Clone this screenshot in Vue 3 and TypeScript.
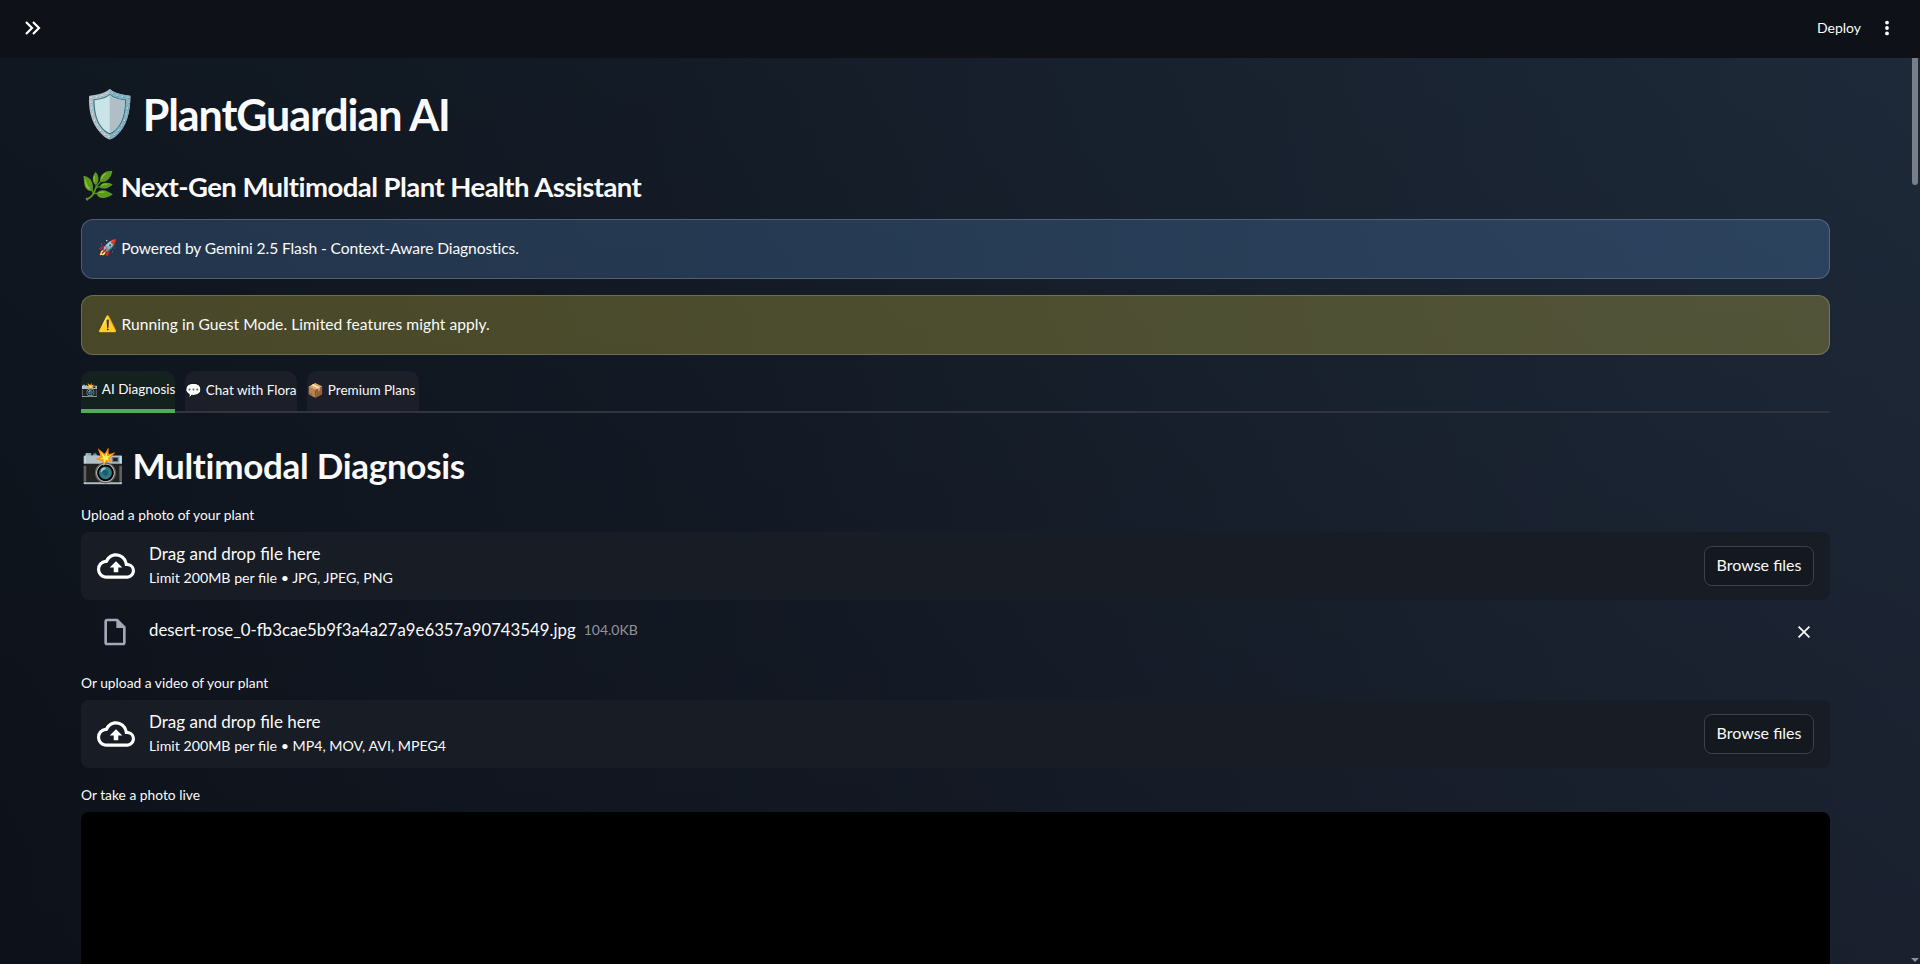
<script setup lang="ts">
const tabs = [
  { icon: '📸', label: 'AI Diagnosis', active: true },
  { icon: '💬', label: 'Chat with Flora', active: false },
  { icon: '📦', label: 'Premium Plans', active: false },
]
</script>

<template>
  <div class="app">
    <header class="topbar">
      <svg class="expand" viewBox="0 0 24 24" width="24" height="24" fill="none" stroke="#fff" stroke-width="2.2">
        <path d="M6 6l6 6-6 6M13 6l6 6-6 6" />
      </svg>
      <div class="top-actions">
        <span class="deploy">Deploy</span>
        <svg viewBox="0 0 24 24" width="24" height="24" fill="#fff">
          <circle cx="12" cy="6.6" r="1.9" /><circle cx="12" cy="12" r="1.9" /><circle cx="12" cy="17.4" r="1.9" />
        </svg>
      </div>
    </header>
    <main class="main">
      <h1 class="title"><span class="emoji">🛡️</span><span>PlantGuardian AI</span></h1>
      <h3 class="subtitle"><span class="emoji">🌿</span><span>Next-Gen Multimodal Plant Health Assistant</span></h3>
      <div class="alert info"><span class="emoji">🚀</span><span>Powered by Gemini 2.5 Flash - Context-Aware Diagnostics.</span></div>
      <div class="alert warn"><span class="emoji">⚠️</span><span>Running in Guest Mode. Limited features might apply.</span></div>
      <nav class="tabs">
        <div v-for="t in tabs" :key="t.label" class="tab" :class="{ active: t.active }">
          <span class="emoji">{{ t.icon }}</span><span>{{ t.label }}</span>
        </div>
      </nav>
      <h2 class="section"><span class="emoji">📸</span><span>Multimodal Diagnosis</span></h2>

      <div class="label first">Upload a photo of your plant</div>
      <div class="drop">
        <svg class="cloud" viewBox="0 0 24 24" width="38" height="38" fill="#fff">
          <path d="M19.35 10.04A7.49 7.49 0 0 0 12 4C9.11 4 6.6 5.64 5.35 8.04A5.994 5.994 0 0 0 0 14c0 3.31 2.69 6 6 6h13c2.76 0 5-2.24 5-5 0-2.64-2.05-4.78-4.65-4.96zM19 18H6c-2.21 0-4-1.79-4-4 0-2.05 1.53-3.76 3.56-3.97l1.07-.11.5-.95A5.469 5.469 0 0 1 12 6c2.62 0 4.88 1.86 5.39 4.43l.3 1.5 1.53.11A2.98 2.98 0 0 1 22 15c0 1.65-1.35 3-3 3zM8 13h2.55v3h2.9v-3H16l-4-4z" />
        </svg>
        <div class="drop-text">
          <div class="drop-title">Drag and drop file here</div>
          <div class="drop-sub">Limit 200MB per file • JPG, JPEG, PNG</div>
        </div>
        <button class="browse">Browse files</button>
      </div>
      <div class="file">
        <svg class="file-icon" viewBox="0 0 24 24" width="32" height="32" fill="#a3a8b8">
          <path d="M14 2H6c-1.1 0-1.99.9-1.99 2L4 20c0 1.1.89 2 1.99 2H18c1.1 0 2-.9 2-2V8l-6-6zM6 20V4h7v5h5v11H6z" />
        </svg>
        <span class="file-name">desert-rose_0-fb3cae5b9f3a4a27a9e6357a90743549.jpg</span>
        <span class="file-size">104.0KB</span>
        <svg class="close" viewBox="0 0 24 24" width="20" height="20" fill="none" stroke="#fff" stroke-width="2">
          <path d="M5.5 5.5l13 13M18.5 5.5l-13 13" />
        </svg>
      </div>

      <div class="label second">Or upload a video of your plant</div>
      <div class="drop">
        <svg class="cloud" viewBox="0 0 24 24" width="38" height="38" fill="#fff">
          <path d="M19.35 10.04A7.49 7.49 0 0 0 12 4C9.11 4 6.6 5.64 5.35 8.04A5.994 5.994 0 0 0 0 14c0 3.31 2.69 6 6 6h13c2.76 0 5-2.24 5-5 0-2.64-2.05-4.78-4.65-4.96zM19 18H6c-2.21 0-4-1.79-4-4 0-2.05 1.53-3.76 3.56-3.97l1.07-.11.5-.95A5.469 5.469 0 0 1 12 6c2.62 0 4.88 1.86 5.39 4.43l.3 1.5 1.53.11A2.98 2.98 0 0 1 22 15c0 1.65-1.35 3-3 3zM8 13h2.55v3h2.9v-3H16l-4-4z" />
        </svg>
        <div class="drop-text">
          <div class="drop-title">Drag and drop file here</div>
          <div class="drop-sub">Limit 200MB per file • MP4, MOV, AVI, MPEG4</div>
        </div>
        <button class="browse">Browse files</button>
      </div>

      <div class="label third">Or take a photo live</div>
      <div class="camera"></div>
    </main>
    <div class="scrollbar"><div class="thumb"></div><div class="arrow"></div></div>
  </div>
</template>

<style>
html, body { margin: 0; background: #0e1117; overflow: hidden; }
</style>

<style scoped>
.app {
  position: relative;
  width: 1920px;
  height: 964px;
  overflow: hidden;
  color: #fafafa;
  font-family: Lato, "Noto Sans", sans-serif;
  background:
    radial-gradient(circle at 100% 0, rgba(50, 90, 110, 0.12), transparent 60%),
    linear-gradient(to bottom, rgba(40, 80, 100, 0.1), transparent),
    linear-gradient(to right, #0d1119, #191e2c);
}
.emoji { font-family: "Noto Color Emoji", sans-serif; }
.topbar {
  height: 58px;
  box-sizing: border-box;
  display: flex;
  align-items: center;
  justify-content: space-between;
  padding: 0 21px 3px 20px;
  background: #0e1117;
}
.top-actions { display: flex; align-items: center; gap: 14px; }
.deploy { font-size: 14px; }
.main {
  box-sizing: border-box;
  padding: 0 90px 0 81px;
  display: flex;
  flex-direction: column;
}
.title {
  margin: 25px 0 0;
  display: flex;
  align-items: center;
  gap: 4.5px;
  height: 62px;
  font-size: 43px;
  font-weight: 700;
  letter-spacing: -1.1px;
}
.title .emoji { font-size: 46px; letter-spacing: 0; line-height: 62px; }
.subtitle {
  margin: 22px 0 0;
  display: flex;
  align-items: center;
  gap: 6px;
  height: 38px;
  font-size: 27.5px;
  font-weight: 700;
  letter-spacing: -0.55px;
}
.subtitle .emoji { font-size: 27px; letter-spacing: 0; }
.alert {
  box-sizing: border-box;
  height: 60px;
  display: flex;
  align-items: center;
  gap: 4px;
  padding: 0 16px 3px;
  border-radius: 12px;
  border: 1px solid rgba(255, 255, 255, 0.2);
  font-size: 15.6px;
  letter-spacing: -0.1px;
}
.info { margin-top: 14px; background: rgba(100, 158, 230, 0.23); }
.warn { margin-top: 16px; background: rgba(223, 203, 70, 0.28); letter-spacing: 0.04px; }
.tabs {
  box-sizing: border-box;
  display: flex;
  gap: 10px;
  height: 42px;
  margin-top: 16px;
  border-bottom: 2px solid #31333f;
}
.tab {
  background: #1c1f28;
  border-radius: 10px 10px 0 0;
  font-size: 13.5px;
  line-height: 38px;
  white-space: nowrap;
  width: 112px;
  display: flex;
  gap: 4px;
}
.tab.active {
  width: 94px;
  background: #13221f;
  height: 42px;
  line-height: 36px;
  box-sizing: border-box;
  border-bottom: 4px solid #4caf50;
}
.section {
  margin: 27px 0 0;
  display: flex;
  align-items: center;
  gap: 8px;
  height: 50px;
  font-size: 35px;
  font-weight: 700;
  letter-spacing: -0.3px;
}
.section .emoji { font-size: 35px; letter-spacing: 0; }
.label { font-size: 13.8px; line-height: 18px; }
.first { margin-top: 16px; }
.second { margin-top: 10px; }
.third { margin-top: 18px; }
.drop {
  margin-top: 8px;
  height: 68px;
  box-sizing: border-box;
  padding: 0 16px;
  display: flex;
  align-items: center;
  border-radius: 8px;
  background: #171c25;
}
.cloud { flex: none; margin-right: 14px; }
.drop-text { flex: 1; }
.drop-title { font-size: 17px; line-height: 22px; }
.drop-sub { font-size: 14.2px; line-height: 22px; margin-top: 2px; }
.browse {
  width: 110px;
  height: 40px;
  padding: 0 0 3px;
  background: #14181f;
  border: 1px solid #3d414c;
  border-radius: 8px;
  color: #fafafa;
  font-size: 16px;
  font-family: Lato, sans-serif;
}
.file {
  height: 64px;
  display: flex;
  align-items: center;
  padding: 0 16px 0 18px;
}
.file-icon { margin-right: 18px; }
.file-name { font-size: 16.8px; margin-top: -6px; }
.file-size { font-size: 14px; color: #92949b; margin-left: 8px; margin-top: -6px; flex: 1; }
.camera { margin-top: 8px; height: 300px; background: #000; border-radius: 8px 8px 0 0; }
.scrollbar { position: absolute; top: 58px; right: 0; bottom: 0; width: 10px; }
.thumb { position: absolute; top: 0; right: 2px; width: 6px; height: 127px; background: #7a7e89; border-radius: 0 0 3px 3px; }
.arrow {
  position: absolute; right: 1px; bottom: 2px; width: 0; height: 0;
  border-left: 4px solid transparent; border-right: 4px solid transparent; border-top: 4px solid #8d8f96;
}
</style>
